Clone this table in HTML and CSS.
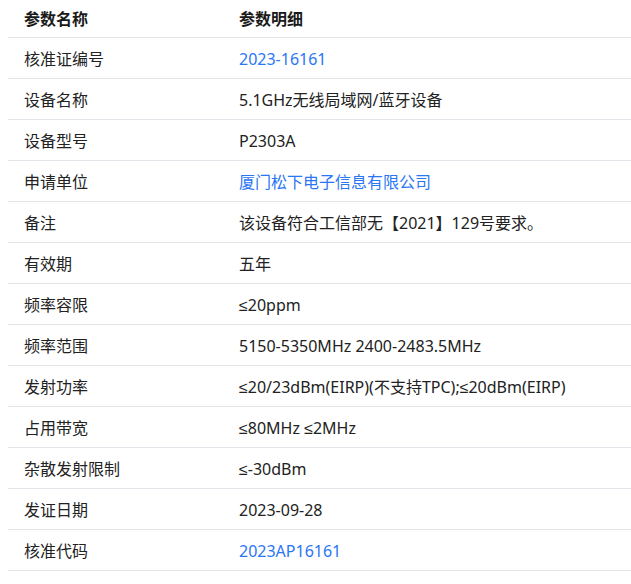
FILE: index.html
```html
<!DOCTYPE html>
<html lang="zh-CN">
<head>
<meta charset="utf-8">
<title>参数</title>
<link rel="stylesheet" href="styles.css">
</head>
<body>
<table class="params">
  <thead>
    <tr><th class="col-name">参数名称</th><th>参数明细</th></tr>
  </thead>
  <tbody>
    <tr><td>核准证编号</td><td><a class="link" href="#">2023-16161</a></td></tr>
    <tr><td>设备名称</td><td>5.1GHz无线局域网/蓝牙设备</td></tr>
    <tr><td>设备型号</td><td>P2303A</td></tr>
    <tr><td>申请单位</td><td><a class="link" href="#">厦门松下电子信息有限公司</a></td></tr>
    <tr><td>备注</td><td>该设备符合工信部无【2021】129号要求。</td></tr>
    <tr><td>有效期</td><td>五年</td></tr>
    <tr><td>频率容限</td><td>≤20ppm</td></tr>
    <tr><td>频率范围</td><td>5150-5350MHz 2400-2483.5MHz</td></tr>
    <tr><td>发射功率</td><td>≤20/23dBm(EIRP)(不支持TPC);≤20dBm(EIRP)</td></tr>
    <tr><td>占用带宽</td><td>≤80MHz ≤2MHz</td></tr>
    <tr><td>杂散发射限制</td><td>≤-30dBm</td></tr>
    <tr><td>发证日期</td><td>2023-09-28</td></tr>
    <tr><td>核准代码</td><td><a class="link" href="#">2023AP16161</a></td></tr>
  </tbody>
</table>
</body>
</html>
```
FILE: styles.css
```css
html, body {
  margin: 0;
  padding: 0;
  background: #fff;
}
body {
  padding-left: 8px;
  font-family: "Noto Sans", "Liberation Sans", "Noto Sans CJK SC", sans-serif;
  font-size: 16px;
  color: #222;
}
.params {
  width: 100%;
  border-collapse: collapse;
  table-layout: fixed;
}
.params th,
.params td {
  text-align: left;
  padding: 0 16px;
  border-bottom: 1px solid #e3e3ea;
  white-space: nowrap;
  line-height: 20px;
}
.params th {
  height: 37px;
  font-weight: bold;
  color: #1a1a1a;
}
.params td {
  height: 38px;
  padding-top: 2px;
}
.col-name {
  width: 183px;
}
.link {
  color: #2a76f5;
  text-decoration: none;
}
```
